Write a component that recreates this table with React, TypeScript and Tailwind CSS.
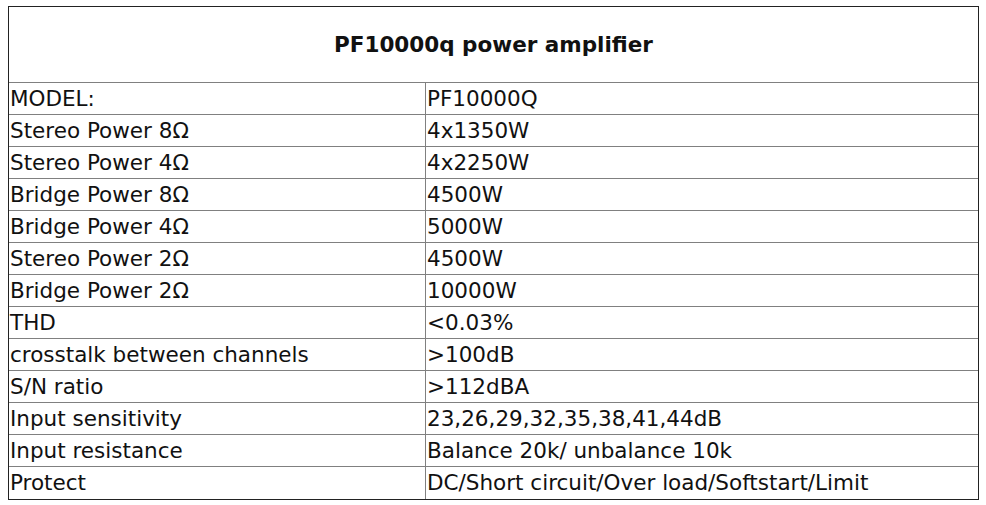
const specs: [string, string][] = [
  ["MODEL:", "PF10000Q"],
  ["Stereo Power 8Ω", "4x1350W"],
  ["Stereo Power 4Ω", "4x2250W"],
  ["Bridge Power 8Ω", "4500W"],
  ["Bridge Power 4Ω", "5000W"],
  ["Stereo Power 2Ω", "4500W"],
  ["Bridge Power 2Ω", "10000W"],
  ["THD", "<0.03%"],
  ["crosstalk between channels", ">100dB"],
  ["S/N ratio", ">112dBA"],
  ["Input sensitivity", "23,26,29,32,35,38,41,44dB"],
  ["Input resistance", "Balance 20k/ unbalance 10k"],
  ["Protect", "DC/Short circuit/Over load/Softstart/Limit"],
];

export default function App() {
  return (
    <div className="h-[505px] w-[986px] bg-white pl-2 pt-[6px] font-['DejaVu_Sans',Verdana,sans-serif] text-[#111]">
      <div className="w-[971px] border border-[#222]">
        {/* Title */}
        <div className="flex h-[76px] items-center justify-center border-b border-[#808080] pt-[2px] text-[21.5px] font-bold">
          PF10000q power amplifier
        </div>

        {/* Spec rows */}
        {specs.map(([label, value], i) => (
          <div
            key={label}
            className={`grid h-[32px] grid-cols-[417px_1fr] text-[21.5px] leading-[32px] ${
              i < specs.length - 1 ? "border-b border-[#808080]" : ""
            }`}
          >
            <div className="border-r border-[#808080] pl-[1px]">{label}</div>
            <div className="pl-[1px]">{value}</div>
          </div>
        ))}
      </div>
    </div>
  );
}
